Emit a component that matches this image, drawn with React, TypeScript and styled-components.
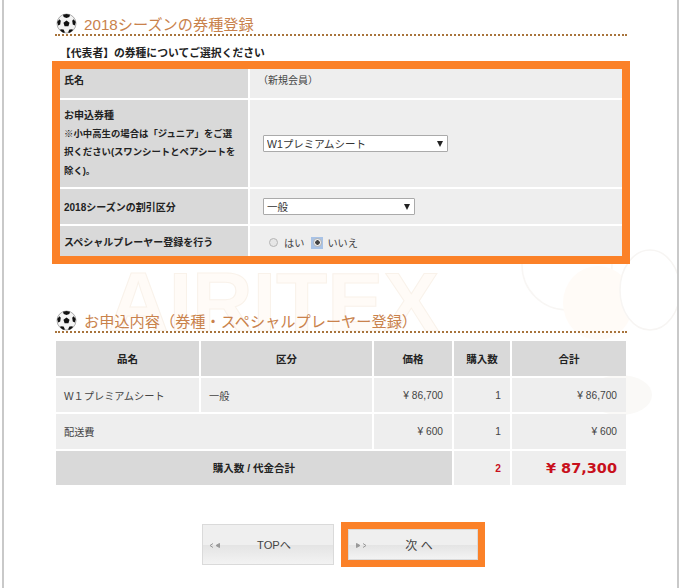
import React from 'react';
import styled, { createGlobalStyle } from 'styled-components';

const GlobalStyle = createGlobalStyle`
  html, body {
    margin: 0;
    padding: 0;
    background: #fff;
    font-family: "Liberation Sans", "Noto Sans CJK JP", sans-serif;
    color: #333;
  }
`;

const Frame = styled.div`
  position: relative;
  box-sizing: border-box;
  width: 677px;
  height: 588px;
  margin-left: 2px;
  padding: 14px 0 0 48px;
  overflow: hidden;
  border-left: 2px solid #c9c9c9;
  border-right: 2px solid #c9c9c9;
`;

const Watermark = styled.div`
  position: absolute;
  left: 104px;
  top: 266px;
  font-family: "Liberation Sans", sans-serif;
  font-size: 84px;
  font-weight: 700;
  line-height: 72px;
  letter-spacing: 0;
  color: #fffbf7;
  -webkit-text-stroke: 1px #f9f2ea;
`;

const Mascot = styled.svg`
  position: absolute;
  left: 516px;
  top: 245px;
`;

const Content = styled.div`
  position: relative;
`;

const Heading = styled.h2<{ $top?: number }>`
  box-sizing: border-box;
  display: flex;
  align-items: center;
  gap: 7px;
  width: 572px;
  height: 22px;
  margin: ${({ $top }) => $top ?? 0}px 0 0 3px;
  padding-left: 1px;
  border-bottom: 2px dotted #a8743c;
  font-size: 15.2px;
  font-weight: 400;
  line-height: 20px;
  color: #c9824c;
`;

const HeadingText = styled.span`
  margin-top: 2px;
`;

const Lead = styled.p`
  height: 16px;
  margin: 9px 0 0 8px;
  font-size: 10.8px;
  font-weight: 700;
  line-height: 16px;
  color: #222;
`;

const HighlightBox = styled.div`
  box-sizing: border-box;
  width: 578px;
  height: 203px;
  border: 8px solid #fb8128;
`;

const FormGrid = styled.div`
  display: grid;
  grid-template-columns: 188px 372px;
  grid-template-rows: 29px 87px 35px 30px;
  gap: 2px;
  background: #fff;
`;

const FormLabel = styled.div<{ $raised?: boolean }>`
  display: flex;
  flex-direction: column;
  justify-content: center;
  padding: 0 0 ${({ $raised }) => ($raised ? 8 : 0)}px 4px;
  background: #d9d9d9;
  font-size: 10px;
  font-weight: 700;
  color: #222;
`;

const FormNote = styled.span`
  margin-top: 3px;
  padding-right: 10px;
  font-size: 9.4px;
  line-height: 18.5px;
`;

const FormValue = styled.div<{ $raised?: boolean }>`
  display: flex;
  align-items: center;
  padding: 0 0 ${({ $raised }) => ($raised ? 8 : 0)}px 13px;
  background: #eee;
  font-size: 10px;
  color: #444;
`;

const NewMember = styled.span`
  margin-left: -5px;
`;

const SelectWrap = styled.div<{ $width: number }>`
  position: relative;
  width: ${({ $width }) => $width}px;
  height: 17px;

  &::after {
    content: '';
    position: absolute;
    right: 5px;
    top: 6px;
    border-left: 3.5px solid transparent;
    border-right: 3.5px solid transparent;
    border-top: 6px solid #222;
  }
`;

const Select = styled.select`
  box-sizing: border-box;
  width: 100%;
  height: 100%;
  padding: 0 0 0 3px;
  appearance: none;
  background: #fff;
  border: 1px solid #aaa;
  border-radius: 1px;
  font-family: "Liberation Sans", "Noto Sans CJK JP", sans-serif;
  font-size: 10.5px;
  color: #333;
`;

const RadioRow = styled.div`
  display: flex;
  align-items: center;
  padding: 3px 0 0 4px;
`;

const RadioMark = styled.span<{ $checked?: boolean }>`
  display: flex;
  align-items: center;
  justify-content: center;
  width: 12px;
  height: 12px;
  margin-right: ${({ $checked }) => ($checked ? 4 : 5)}px;
  background: ${({ $checked }) => ($checked ? '#a9c3e6' : 'transparent')};

  &::before {
    content: '';
    box-sizing: border-box;
    width: 9px;
    height: 9px;
    border-radius: 50%;
    border: 1px solid #b5b5b5;
    background: ${({ $checked }) =>
      $checked ? 'radial-gradient(circle, #444 0 2px, #eee 2.5px)' : '#e6e6e6'};
  }
`;

const RadioText = styled.span`
  margin-right: 7px;
  font-size: 10.2px;
  color: #444;
`;

const OrderGrid = styled.div`
  display: grid;
  grid-template-columns: 143px 171px 78px 56px 114px;
  grid-template-rows: 35px 34px 35px 34px;
  gap: 2px;
  width: 570px;
  margin: 8px 0 0 4px;
`;

const HeadCell = styled.div`
  display: flex;
  align-items: center;
  justify-content: center;
  padding-bottom: 1px;
  background: #d9d9d9;
  font-size: 10.5px;
  font-weight: 700;
  color: #222;
`;

const TotalLabel = styled(HeadCell)`
  grid-column: span 3;
`;

const Cell = styled.div<{ $right?: boolean; $span?: number }>`
  display: flex;
  align-items: center;
  justify-content: ${({ $right }) => ($right ? 'flex-end' : 'flex-start')};
  grid-column: span ${({ $span }) => $span ?? 1};
  padding: 0 9px 0 8px;
  background: #eee;
  font-size: 10.2px;
  color: #444;
`;

const TotalQty = styled(Cell)`
  font-weight: 700;
  color: #c8101c;
`;

const TotalPrice = styled(Cell)`
  font-family: "DejaVu Sans", sans-serif;
  font-size: 14.5px;
  font-weight: 700;
  color: #c8101c;
`;

const ButtonRow = styled.div`
  display: flex;
  align-items: center;
  gap: 7px;
  margin: 37px 0 0 150px;
`;

const NavButton = styled.button<{ $width: number; $height: number; $size: number }>`
  position: relative;
  box-sizing: border-box;
  width: ${({ $width }) => $width}px;
  height: ${({ $height }) => $height}px;
  padding: 0 0 1px 12px;
  border: 1px solid #dadada;
  background: linear-gradient(#efefef 0 50%, #e4e4e4 52%, #f3f3f3 100%);
  font-family: "Liberation Sans", "Noto Sans CJK JP", sans-serif;
  font-size: ${({ $size }) => $size}px;
  color: #444;
`;

const ButtonArrow = styled.svg`
  position: absolute;
  left: 6px;
  top: 50%;
  margin-top: -2px;
`;

const ButtonHighlight = styled.div`
  border: 7px solid #fb8128;
  line-height: 0;
`;

function Ball() {
  return (
    <svg width="21" height="21" viewBox="0 0 21 21" style={{ flex: 'none', marginBottom: 1 }}>
      <circle cx="10.5" cy="10.5" r="9.5" fill="#f4f4f4" stroke="#777" strokeWidth="0.6" />
      <path d="M10.5 7.5l3 2.2-1.1 3.5H8.6L7.5 9.7z" fill="#111" />
      <path d="M7 1.7l3.5-.7 3.5.8-.7 2.3-2.8.9-2.8-1z" fill="#111" />
      <path d="M1.2 9l2.2-2.8 1.4 1.6-.6 3.6-2 1.2z" fill="#111" />
      <path d="M19.8 9l-2.2-2.8-1.4 1.6.6 3.6 2 1.2z" fill="#111" />
      <path d="M4.4 16.2l3.2.2 1.4 3.2-1.8.2-2.8-2z" fill="#111" />
      <path d="M16.6 16.2l-3.2.2-1.4 3.2 1.8.2 2.8-2z" fill="#111" />
    </svg>
  );
}

function Arrows({ flip }: { flip?: boolean }) {
  return (
    <ButtonArrow width="12" height="5" viewBox="0 0 12 5">
      <g transform={flip ? 'translate(12 0) scale(-1 1)' : undefined} fill="none" stroke="#999">
        <path d="M4 .5L1 2.5l3 2" />
        <path d="M10.5 .5L7 2.5l3.5 2V.5z" fill="#999" />
      </g>
    </ButtonArrow>
  );
}

export default function App() {
  return (
    <>
      <GlobalStyle />
      <Frame>
        <Watermark>AIRITEX</Watermark>
        <Mascot width="160" height="180" viewBox="0 0 160 180" fill="none">
          <circle cx="47" cy="20" r="45" stroke="#f8f6f4" strokeWidth="1.5" />
          <ellipse cx="78" cy="58" rx="35" ry="37" fill="#fffbf7" />
          <ellipse cx="130" cy="45" rx="30" ry="40" fill="#fff" stroke="#f7f5f3" strokeWidth="1.5" />
          <ellipse cx="100" cy="150" rx="32" ry="20" fill="#faf9f7" />
        </Mascot>
        <Content>
          <Heading>
            <Ball />
            <HeadingText>2018シーズンの券種登録</HeadingText>
          </Heading>
          <Lead>【代表者】の券種についてご選択ください</Lead>
          <HighlightBox>
            <FormGrid>
              <FormLabel $raised>氏名</FormLabel>
              <FormValue $raised>
                <NewMember>（新規会員）</NewMember>
              </FormValue>
              <FormLabel>
                お申込券種
                <FormNote>
                  ※小中高生の場合は「ジュニア」をご選択ください(スワンシートとペアシートを除く)。
                </FormNote>
              </FormLabel>
              <FormValue>
                <SelectWrap $width={185}>
                  <Select defaultValue="premium">
                    <option value="premium">W1プレミアムシート</option>
                  </Select>
                </SelectWrap>
              </FormValue>
              <FormLabel>2018シーズンの割引区分</FormLabel>
              <FormValue>
                <SelectWrap $width={152}>
                  <Select defaultValue="general">
                    <option value="general">一般</option>
                  </Select>
                </SelectWrap>
              </FormValue>
              <FormLabel>スペシャルプレーヤー登録を行う</FormLabel>
              <FormValue>
                <RadioRow>
                  <RadioMark />
                  <RadioText>はい</RadioText>
                  <RadioMark $checked />
                  <RadioText>いいえ</RadioText>
                </RadioRow>
              </FormValue>
            </FormGrid>
          </HighlightBox>

          <Heading $top={47}>
            <Ball />
            <HeadingText>お申込内容（券種・スペシャルプレーヤー登録）</HeadingText>
          </Heading>
          <OrderGrid>
            <HeadCell>品名</HeadCell>
            <HeadCell>区分</HeadCell>
            <HeadCell>価格</HeadCell>
            <HeadCell>購入数</HeadCell>
            <HeadCell>合計</HeadCell>

            <Cell>W１プレミアムシート</Cell>
            <Cell>一般</Cell>
            <Cell $right>¥ 86,700</Cell>
            <Cell $right>1</Cell>
            <Cell $right>¥ 86,700</Cell>

            <Cell $span={2}>配送費</Cell>
            <Cell $right>¥ 600</Cell>
            <Cell $right>1</Cell>
            <Cell $right>¥ 600</Cell>

            <TotalLabel>購入数 / 代金合計</TotalLabel>
            <TotalQty $right>2</TotalQty>
            <TotalPrice $right>¥ 87,300</TotalPrice>
          </OrderGrid>

          <ButtonRow>
            <NavButton $width={132} $height={41} $size={11.2}>
              <Arrows />
              TOPへ
            </NavButton>
            <ButtonHighlight>
              <NavButton $width={130} $height={31} $size={12}>
                <Arrows flip />
                次 へ
              </NavButton>
            </ButtonHighlight>
          </ButtonRow>
        </Content>
      </Frame>
    </>
  );
}
